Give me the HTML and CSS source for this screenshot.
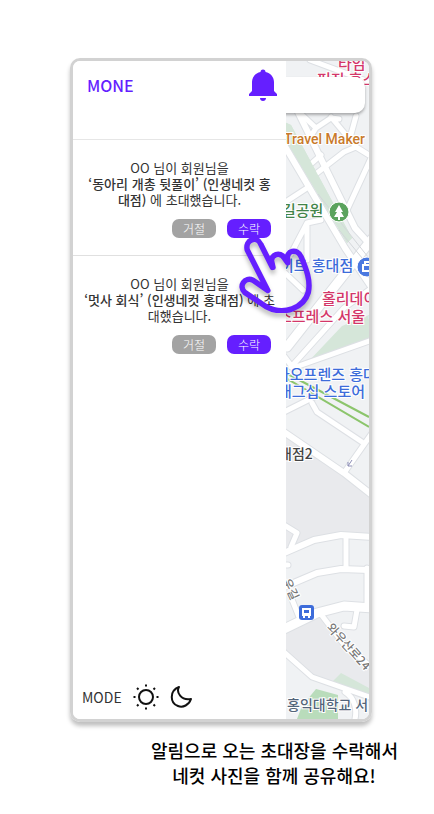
FILE: index.html
```html
<!DOCTYPE html>
<html lang="ko">
<head>
<meta charset="utf-8">
<meta name="viewport" content="width=device-width, initial-scale=1">
<title>MONE</title>
<link rel="stylesheet" href="styles.css">
</head>
<body>
<main class="page">
  <section class="phone">
    <div class="drawer">
      <header class="header">
        <h1 class="brand">MONE</h1>
        <button class="icon-button" type="button" aria-label="알림">
          <svg width="28" height="32" viewBox="0 0 28 32" fill="#651fff"><path d="M11.500 3a2.500 2.500 0 0 1 5 0c5 1 8.500 5 8.500 10v9l3 3v2H0v-2l3-3v-9c0-5 3.500-9 8.500-10zM11 29h6c0 1.700-1.300 3-3 3s-3-1.300-3-3z"/></svg>
        </button>
      </header>
      <article class="invite">
        <p class="message">OO 님이 회원님을<br><b>‘동아리 개총 뒷풀이’ (인생네컷 홍<br>대점)</b> 에 초대했습니다.</p>
        <div class="actions">
          <button class="pill" type="button">거절</button>
          <button class="pill accept pointed" type="button">수락
            <svg class="hand" width="79" height="83" viewBox="0 0 246 258" fill="none" stroke="#651fff" stroke-width="17" stroke-linecap="round" stroke-linejoin="round"><path d="M110 116 74 44C62 16 24 30 32 62L96 188 50 156C24 144 4 174 24 194L90 238C146 268 208 242 222 194 230 158 216 122 200 84 188 54 150 64 158 94L158 102 148 88C134 64 104 78 108 98L112 116"/></svg>
          </button>
        </div>
      </article>
      <article class="invite">
        <p class="message">OO 님이 회원님을<br><b>‘멋사 회식’ (인생네컷 홍대점)</b> 에 초<br>대했습니다.</p>
        <div class="actions">
          <button class="pill" type="button">거절</button>
          <button class="pill accept" type="button">수락</button>
        </div>
      </article>
      <footer class="mode">
        <span>MODE</span>
        <button class="icon-button" type="button" aria-label="라이트 모드">
          <svg width="26" height="26" viewBox="0 0 26 26" fill="none" stroke="#111" stroke-width="2"><circle cx="13" cy="13" r="7"/><path d="M13 .5v2M13 23.500v2M.5 13h2M23.500 13h2M4 4l1.500 1.500M20.500 20.500 22 22M22 4l-1.500 1.500M5.500 20.500 4 22"/></svg>
        </button>
        <button class="icon-button" type="button" aria-label="다크 모드">
          <svg width="22" height="22" viewBox="0 0 22 22" fill="none" stroke="#111" stroke-width="2" stroke-linejoin="round"><path d="M9 1C6 6 11 15 21 13C19 19 13 22 8 20C0 17-1 5 9 1z"/></svg>
        </button>
      </footer>
    </div>
    <div class="map">
      <svg class="map-art" viewBox="286 61 83 658" role="img" aria-label="홍대 지도">
        <defs>
          <path id="streets" d="M310 60 369 82M300 113 316 128 331 118 339 119M316 128 309 139M331 117 356 147M350 138 356 116M369 155 356 147 344 152 317 173M312 163 321 155M372 156 347 210M284 203 307 188M284 267 307 223 321 220M307 223V260M284 272 303 290M291 367 344 308 372 288M284 356 293 368 372 340M284 412 314 397M312 403 317 412 362 442M372 433 344 473M284 525 297 533 291 547M284 565H288M346 537V568M367 568V606M291 597 299 617M320 613 342 642 372 668M357 610 354 627 344 626M284 652 312 677 372 698M345 692C355 698 357 710 355 719"/>
          <path id="avenues" d="M280 138 345 248 372 288M297 110 355 228 375 250M284 432 344 473 372 495M284 553 314 540 341 535 372 537M284 587 317 573 341 569 372 570"/>
          <path id="boulevards" d="M372 239 287 347M284 629 317 613 344 606 372 608"/>
        </defs>
        <path fill="#f0f2f4" d="M286 61h83v658h-83z"/>
        <path fill="#e9eaed" d="M286 434 343 472 369 490V537L341 535 314 540 286 554zM286 632 317 614 369 670V697L312 677 286 650z"/>
        <path fill="#d5e6d9" d="M284 122 291 125 352 238 347 243 284 138zM307 363 342 326 369 315V342zM332 682 341 673 369 688V697z"/>
        <path fill="#b9dcbb" d="M316 689 338 695V719H297L302 706z"/>
        <g fill="none" stroke="#dde0e4" stroke-linejoin="round" stroke-linecap="round">
          <use href="#streets" stroke-width="7"/>
          <use href="#avenues" stroke-width="8"/>
          <use href="#boulevards" stroke-width="11"/>
        </g>
        <g fill="none" stroke="#fff" stroke-linejoin="round" stroke-linecap="round">
          <use href="#streets" stroke-width="5"/>
          <use href="#avenues" stroke-width="6"/>
          <use href="#boulevards" stroke-width="9"/>
        </g>
        <path fill="#d5e6d9" d="M284 122 291 125 352 238 347 243 286 140z"/>
        <path d="M318 194 372 262M339 230 372 270" stroke="#d3d6da" fill="none"/>
        <path d="M286 373 369 417M286 378 369 427" stroke="#8cc56c" stroke-width="2" fill="none"/>
        <path d="M348 466 352 460M348 462v4h4" stroke="#8b8db5" fill="none"/>
        <g class="labels">
          <g fill="#d33669"><text x="338" y="69">타임</text><text x="317" y="85">퍼진 홍스</text><text x="322" y="304">홀리데이</text><text x="278" y="322">스프레스 서울 홍</text></g>
          <text class="latin" x="284" y="144" fill="#c97a2b">Travel Maker</text>
          <text x="282" y="216" fill="#438449">길공원</text>
          <g fill="#3d6cda"><text x="280" y="271">이트 홍대점</text><text x="276" y="380">카오프렌즈 홍대</text><text x="278" y="397">래그십 스토어</text></g>
          <text class="small" x="279" y="459" fill="#444">대점2</text>
          <text class="small" x="287" y="710" fill="#53657a">홍익대학교 서</text>
          <text class="street" transform="translate(326 628) rotate(48)">와우산로24</text>
          <text class="street" transform="translate(282 581) rotate(65)">우길</text>
        </g>
        <circle cx="339" cy="212" r="10" fill="#5ba35d" stroke="#fff"/><path fill="#fff" d="m339 205 4 7h-2l3 5h-4v3h-2v-3h-4l3-5h-2z"/>
        <circle cx="367" cy="267" r="10" fill="#4a78e0" stroke="#fff"/><path fill="none" stroke="#fff" stroke-width="2" d="M363 265h8v6h-8zM365 265v-3h5"/>
        <rect x="299" y="605" width="15" height="15" rx="3" fill="#3d6cda"/><path fill="#fff" fill-rule="evenodd" d="M302 608h9v8h-1v2h-2v-2h-3v2h-2v-2h-1zM304 610v3h5v-3z"/>
      </svg>
      <input class="search" type="text" aria-label="지도 검색">
    </div>
  </section>
  <p class="caption">알림으로 오는 초대장을 수락해서<br>네컷 사진을 함께 공유해요!</p>
</main>
</body>
</html>
```
FILE: styles.css
```css
* {
  box-sizing: border-box;
}

body {
  margin: 0;
  background: #fff;
  color: #333;
  font-family: "Noto Sans CJK KR", "Noto Sans", sans-serif;
}

h1,
p {
  margin: 0;
}

button {
  border: 0;
  padding: 0;
  font: inherit;
  cursor: pointer;
}

svg {
  display: block;
}

.page {
  padding: 58px 37px 28px 70px;
}

.phone {
  display: grid;
  grid-template-columns: minmax(0, 213fr) minmax(0, 83fr);
  margin-right: 25px;
  border: 3px solid #d2d2d2;
  border-radius: 10px;
  box-shadow: 0 4px 4px rgba(0, 0, 0, 0.25);
}

.drawer {
  display: flex;
  flex-direction: column;
  position: relative;
  z-index: 1;
  background: #fff;
  border-radius: 7px 0 0 7px;
}

.header {
  display: flex;
  align-items: flex-start;
  justify-content: space-between;
  height: 79px;
  padding: 8px 9px 0 14px;
  border-bottom: 1px solid #e6e6e6;
}

.brand {
  padding-top: 4px;
  color: #651fff;
  font-size: 16px;
  font-weight: 500;
  line-height: 24px;
}

.icon-button {
  background: none;
}

.invite {
  padding: 20px 8px 17px;
}

.invite + .invite {
  border-top: 1px solid #e0e0e0;
}

.message {
  font-size: 13px;
  line-height: 16px;
  text-align: center;
  white-space: nowrap;
}

.message b {
  font-weight: 500;
}

.actions {
  display: flex;
  justify-content: flex-end;
  gap: 11px;
  padding: 11px 7px 0 0;
}

.pill {
  width: 44px;
  height: 19px;
  border-radius: 7px;
  background: #a3a3a3;
  color: #fff;
  font-size: 12px;
  font-weight: 300;
  line-height: 18px;
}

.accept {
  background: #651fff;
}

.pointed {
  position: relative;
}

.hand {
  position: absolute;
  top: 11px;
  left: 10px;
  filter: drop-shadow(0 4px 2px rgba(0, 0, 0, 0.25));
}

.mode {
  display: flex;
  align-items: center;
  gap: 11px;
  margin-top: auto;
  padding: 0 9px 9px;
  font-size: 14px;
  font-weight: 400;
}

.map {
  position: relative;
  overflow: hidden;
  border-radius: 0 7px 7px 0;
}

.map-art {
  width: 100%;
  height: auto;
}

.search {
  position: absolute;
  top: 16px;
  right: 4px;
  width: 120%;
  height: 36px;
  border: 0;
  border-radius: 10px;
  background: #fff;
  box-shadow: 0 2px 3px rgba(0, 0, 0, 0.3);
}

.labels {
  font-size: 15px;
  font-weight: 500;
  stroke: #fff;
  stroke-width: 2px;
  paint-order: stroke;
}

.latin {
  font-family: Roboto, sans-serif;
  font-size: 14px;
}

.small {
  font-size: 14px;
}

.street {
  fill: #777;
  font-size: 12px;
}

.caption {
  padding-top: 16px;
  color: #000;
  font-size: 18px;
  font-weight: 500;
  line-height: 25px;
  text-align: center;
  margin-left: 81px;
  white-space: nowrap;
}
```
